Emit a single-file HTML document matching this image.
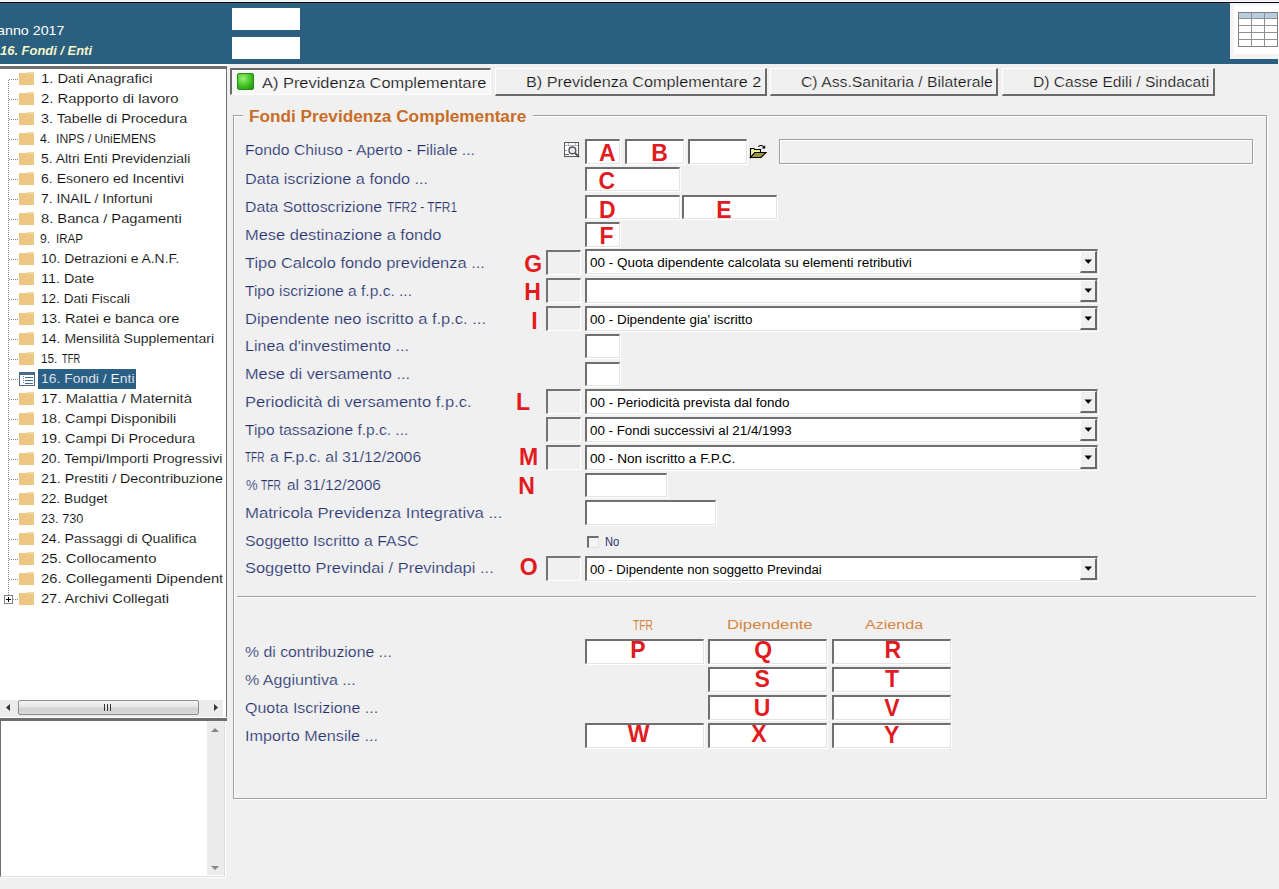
<!DOCTYPE html><html><head><meta charset="utf-8"><style>
*{margin:0;padding:0;box-sizing:border-box}
html,body{width:1279px;height:889px;overflow:hidden;background:#f0f0f0;font-family:"Liberation Sans", sans-serif;position:relative}
.a{position:absolute}
.t{position:absolute;white-space:nowrap;line-height:1}
.sk{position:absolute;background:#fff;border-top:2px solid #6f6f6f;border-left:2px solid #6f6f6f;border-bottom:1px solid #e3e3e3;border-right:1px solid #e3e3e3}
.sg{position:absolute;background:#f0f0f0;border-top:2px solid #747474;border-left:2px solid #747474;border-bottom:1px solid #fff;border-right:1px solid #fff}
.fold{position:absolute;width:15px;height:12px;background:#edc681}
.fold:after{content:"";position:absolute;left:8px;top:-1px;width:7px;height:2px;background:#f3d7a3}
.dh{position:absolute;height:1px;background-image:linear-gradient(to right,#8a8a8a 50%,transparent 50%);background-size:2px 1px}
.dv{position:absolute;width:1px;background-image:linear-gradient(to bottom,#8a8a8a 50%,transparent 50%);background-size:1px 2px}
</style></head><body>
<div class="a" style="left:0;top:0;width:1279px;height:1px;background:#eceef0"></div>
<div class="a" style="left:0;top:1px;width:1279px;height:1px;background:#fafcff"></div>
<div class="a" style="left:0;top:2px;width:1279px;height:1px;background:#000010"></div>
<div class="a" style="left:0;top:3px;width:1278px;height:61px;background:#2a5f7f"></div>
<div class="a" style="left:0;top:3px;width:1230px;height:1px;background:#44607a"></div>
<div class="a" style="left:232px;top:8px;width:68px;height:22px;background:#fff"></div>
<div class="a" style="left:232px;top:37px;width:68px;height:22px;background:#fff"></div>
<div id="t0" class="t" style="left:-3.00px;top:24.96px;font-size:12.8px;color:#fff;transform:scaleX(1.1157);transform-origin:0 0;">anno 2017</div>
<div id="t1" class="t" style="left:-0.50px;top:43.97px;font-size:13.5px;color:#f6f6cc;font-weight:bold;font-style:italic;transform:scaleX(0.9582);transform-origin:0 0;">16. Fondi / Enti</div>
<div class="a" style="left:1230px;top:3px;width:49px;height:56px;background:#f4f4f4"></div>
<div class="a" style="left:1234px;top:6px;width:45px;height:48px;background:#fff"></div>
<svg class="a" style="left:1237px;top:11px" width="42" height="37" viewBox="0 0 42 37"><rect x="1.5" y="1.5" width="39" height="34" fill="#fff" stroke="#808080"/><rect x="2" y="2" width="38" height="5.5" fill="#b9cde0"/><line x1="1.5" y1="7.5" x2="40.5" y2="7.5" stroke="#909090"/><line x1="1.5" y1="14.5" x2="40.5" y2="14.5" stroke="#909090"/><line x1="1.5" y1="21.5" x2="40.5" y2="21.5" stroke="#909090"/><line x1="1.5" y1="28.5" x2="40.5" y2="28.5" stroke="#909090"/><line x1="14.5" y1="1.5" x2="14.5" y2="35.5" stroke="#909090"/><line x1="27.5" y1="1.5" x2="27.5" y2="35.5" stroke="#909090"/></svg>
<div class="a" style="left:0;top:64px;width:228px;height:2px;background:#fff"></div>
<div class="a" style="left:0;top:66px;width:227px;height:655px;background:#fff;border-top:3px solid #707070;border-right:1px solid #707070"></div>
<div class="a" style="left:0;top:69px;width:223px;height:631px;overflow:hidden">
<div class="dv" style="left:8px;top:11px;height:516px"></div>
<div class="dh" style="left:9px;top:10px;width:10px"></div>
<div class="fold" style="left:19px;top:4px"></div>
<div id="t2" class="t" style="left:40.50px;top:3.84px;font-size:12px;color:#0a0a0a;transform:scaleX(1.2291);transform-origin:0 0;-webkit-text-stroke:0.1px #fff;">1. Dati Anagrafici</div>
<div class="dh" style="left:9px;top:30px;width:10px"></div>
<div class="fold" style="left:19px;top:24px"></div>
<div id="t3" class="t" style="left:40.50px;top:23.84px;font-size:12px;color:#0a0a0a;transform:scaleX(1.2342);transform-origin:0 0;-webkit-text-stroke:0.1px #fff;">2. Rapporto di lavoro</div>
<div class="dh" style="left:9px;top:50px;width:10px"></div>
<div class="fold" style="left:19px;top:44px"></div>
<div id="t4" class="t" style="left:40.50px;top:43.84px;font-size:12px;color:#0a0a0a;transform:scaleX(1.1932);transform-origin:0 0;-webkit-text-stroke:0.1px #fff;">3. Tabelle di Procedura</div>
<div class="dh" style="left:9px;top:70px;width:10px"></div>
<div class="fold" style="left:19px;top:64px"></div>
<div id="t5" class="t" style="left:40.30px;top:63.84px;font-size:12px;color:#0a0a0a;transform:scaleX(1.0184);transform-origin:0 0;-webkit-text-stroke:0.1px #fff;">4.</div>
<div id="t6" class="t" style="left:55.50px;top:63.84px;font-size:12px;color:#0a0a0a;transform:scaleX(1.0131);transform-origin:0 0;-webkit-text-stroke:0.1px #fff;">INPS / UniEMENS</div>
<div class="dh" style="left:9px;top:90px;width:10px"></div>
<div class="fold" style="left:19px;top:84px"></div>
<div id="t7" class="t" style="left:40.50px;top:83.84px;font-size:12px;color:#0a0a0a;transform:scaleX(1.1598);transform-origin:0 0;-webkit-text-stroke:0.1px #fff;">5. Altri Enti Previdenziali</div>
<div class="dh" style="left:9px;top:110px;width:10px"></div>
<div class="fold" style="left:19px;top:104px"></div>
<div id="t8" class="t" style="left:40.50px;top:103.84px;font-size:12px;color:#0a0a0a;transform:scaleX(1.1714);transform-origin:0 0;-webkit-text-stroke:0.1px #fff;">6. Esonero ed Incentivi</div>
<div class="dh" style="left:9px;top:130px;width:10px"></div>
<div class="fold" style="left:19px;top:124px"></div>
<div id="t9" class="t" style="left:40.50px;top:123.84px;font-size:12px;color:#0a0a0a;transform:scaleX(1.1581);transform-origin:0 0;-webkit-text-stroke:0.1px #fff;">7. INAIL / Infortuni</div>
<div class="dh" style="left:9px;top:150px;width:10px"></div>
<div class="fold" style="left:19px;top:144px"></div>
<div id="t10" class="t" style="left:40.50px;top:143.84px;font-size:12px;color:#0a0a0a;transform:scaleX(1.2261);transform-origin:0 0;-webkit-text-stroke:0.1px #fff;">8. Banca / Pagamenti</div>
<div class="dh" style="left:9px;top:170px;width:10px"></div>
<div class="fold" style="left:19px;top:164px"></div>
<div id="t11" class="t" style="left:40.30px;top:163.84px;font-size:12px;color:#0a0a0a;transform:scaleX(1.0184);transform-origin:0 0;-webkit-text-stroke:0.1px #fff;">9.</div>
<div id="t12" class="t" style="left:55.50px;top:163.84px;font-size:12px;color:#0a0a0a;transform:scaleX(0.9637);transform-origin:0 0;-webkit-text-stroke:0.1px #fff;">IRAP</div>
<div class="dh" style="left:9px;top:190px;width:10px"></div>
<div class="fold" style="left:19px;top:184px"></div>
<div id="t13" class="t" style="left:40.50px;top:183.84px;font-size:12px;color:#0a0a0a;transform:scaleX(1.1584);transform-origin:0 0;-webkit-text-stroke:0.1px #fff;">10. Detrazioni e A.N.F.</div>
<div class="dh" style="left:9px;top:210px;width:10px"></div>
<div class="fold" style="left:19px;top:204px"></div>
<div id="t14" class="t" style="left:40.50px;top:203.84px;font-size:12px;color:#0a0a0a;transform:scaleX(1.1982);transform-origin:0 0;-webkit-text-stroke:0.1px #fff;">11. Date</div>
<div class="dh" style="left:9px;top:230px;width:10px"></div>
<div class="fold" style="left:19px;top:224px"></div>
<div id="t15" class="t" style="left:40.50px;top:223.84px;font-size:12px;color:#0a0a0a;transform:scaleX(1.1308);transform-origin:0 0;-webkit-text-stroke:0.1px #fff;">12. Dati Fiscali</div>
<div class="dh" style="left:9px;top:250px;width:10px"></div>
<div class="fold" style="left:19px;top:244px"></div>
<div id="t16" class="t" style="left:40.50px;top:243.84px;font-size:12px;color:#0a0a0a;transform:scaleX(1.2052);transform-origin:0 0;-webkit-text-stroke:0.1px #fff;">13. Ratei e banca ore</div>
<div class="dh" style="left:9px;top:270px;width:10px"></div>
<div class="fold" style="left:19px;top:264px"></div>
<div id="t17" class="t" style="left:40.50px;top:263.84px;font-size:12px;color:#0a0a0a;transform:scaleX(1.1683);transform-origin:0 0;-webkit-text-stroke:0.1px #fff;">14. Mensilità Supplementari</div>
<div class="dh" style="left:9px;top:290px;width:10px"></div>
<div class="fold" style="left:19px;top:284px"></div>
<div id="t18" class="t" style="left:41.30px;top:283.84px;font-size:12px;color:#0a0a0a;transform:scaleX(0.9768);transform-origin:0 0;-webkit-text-stroke:0.1px #fff;">15.</div>
<div id="t19" class="t" style="left:62.30px;top:283.84px;font-size:12px;color:#0a0a0a;transform:scaleX(0.7802);transform-origin:0 0;-webkit-text-stroke:0.1px #fff;">TFR</div>
<div class="dh" style="left:9px;top:310px;width:10px"></div>
<div class="a" style="left:38px;top:300px;width:98px;height:20px;background:#2a6086"></div>
<svg class="a" style="left:19px;top:303px" width="16" height="14" viewBox="0 0 16 14"><rect x="0.5" y="0.5" width="15" height="13" fill="#fff" stroke="#4a6a8a"/><rect x="1" y="1" width="14" height="2" fill="#4a6a8a"/><line x1="4.5" y1="4" x2="4.5" y2="12" stroke="#6a8aa8" stroke-dasharray="1 1"/><line x1="6" y1="5.5" x2="14" y2="5.5" stroke="#4a6a8a"/><line x1="6" y1="8.5" x2="14" y2="8.5" stroke="#4a6a8a"/><line x1="6" y1="11.5" x2="14" y2="11.5" stroke="#4a6a8a"/></svg>
<div id="t20" class="t" style="left:40.50px;top:303.84px;font-size:12px;color:#fff;transform:scaleX(1.1583);transform-origin:0 0;-webkit-text-stroke:0.2px #2a6086;">16. Fondi / Enti</div>
<div class="dh" style="left:9px;top:330px;width:10px"></div>
<div class="fold" style="left:19px;top:324px"></div>
<div id="t21" class="t" style="left:40.50px;top:323.84px;font-size:12px;color:#0a0a0a;transform:scaleX(1.2363);transform-origin:0 0;-webkit-text-stroke:0.1px #fff;">17. Malattia / Maternità</div>
<div class="dh" style="left:9px;top:350px;width:10px"></div>
<div class="fold" style="left:19px;top:344px"></div>
<div id="t22" class="t" style="left:40.50px;top:343.84px;font-size:12px;color:#0a0a0a;transform:scaleX(1.1994);transform-origin:0 0;-webkit-text-stroke:0.1px #fff;">18. Campi Disponibili</div>
<div class="dh" style="left:9px;top:370px;width:10px"></div>
<div class="fold" style="left:19px;top:364px"></div>
<div id="t23" class="t" style="left:40.50px;top:363.84px;font-size:12px;color:#0a0a0a;transform:scaleX(1.2033);transform-origin:0 0;-webkit-text-stroke:0.1px #fff;">19. Campi Di Procedura</div>
<div class="dh" style="left:9px;top:390px;width:10px"></div>
<div class="fold" style="left:19px;top:384px"></div>
<div id="t24" class="t" style="left:40.50px;top:383.84px;font-size:12px;color:#0a0a0a;transform:scaleX(1.1735);transform-origin:0 0;-webkit-text-stroke:0.1px #fff;">20. Tempi/Importi Progressivi</div>
<div class="dh" style="left:9px;top:410px;width:10px"></div>
<div class="fold" style="left:19px;top:404px"></div>
<div id="t25" class="t" style="left:40.50px;top:403.84px;font-size:12px;color:#0a0a0a;transform:scaleX(1.1856);transform-origin:0 0;-webkit-text-stroke:0.1px #fff;">21. Prestiti / Decontribuzione</div>
<div class="dh" style="left:9px;top:430px;width:10px"></div>
<div class="fold" style="left:19px;top:424px"></div>
<div id="t26" class="t" style="left:40.50px;top:423.84px;font-size:12px;color:#0a0a0a;transform:scaleX(1.1488);transform-origin:0 0;-webkit-text-stroke:0.1px #fff;">22. Budget</div>
<div class="dh" style="left:9px;top:450px;width:10px"></div>
<div class="fold" style="left:19px;top:444px"></div>
<div id="t27" class="t" style="left:40.50px;top:443.84px;font-size:12px;color:#0a0a0a;transform:scaleX(1.0563);transform-origin:0 0;-webkit-text-stroke:0.1px #fff;">23. 730</div>
<div class="dh" style="left:9px;top:470px;width:10px"></div>
<div class="fold" style="left:19px;top:464px"></div>
<div id="t28" class="t" style="left:40.50px;top:463.84px;font-size:12px;color:#0a0a0a;transform:scaleX(1.1781);transform-origin:0 0;-webkit-text-stroke:0.1px #fff;">24. Passaggi di Qualifica</div>
<div class="dh" style="left:9px;top:490px;width:10px"></div>
<div class="fold" style="left:19px;top:484px"></div>
<div id="t29" class="t" style="left:40.50px;top:483.84px;font-size:12px;color:#0a0a0a;transform:scaleX(1.2367);transform-origin:0 0;-webkit-text-stroke:0.1px #fff;">25. Collocamento</div>
<div class="dh" style="left:9px;top:510px;width:10px"></div>
<div class="fold" style="left:19px;top:504px"></div>
<div id="t30" class="t" style="left:40.50px;top:503.84px;font-size:12px;color:#0a0a0a;transform:scaleX(1.2304);transform-origin:0 0;-webkit-text-stroke:0.1px #fff;">26. Collegamenti Dipendenti</div>
<div class="dh" style="left:9px;top:530px;width:10px"></div>
<div class="fold" style="left:19px;top:524px"></div>
<div id="t31" class="t" style="left:40.50px;top:523.84px;font-size:12px;color:#0a0a0a;transform:scaleX(1.2155);transform-origin:0 0;-webkit-text-stroke:0.1px #fff;">27. Archivi Collegati</div>
<div class="a" style="left:4px;top:526px;width:9px;height:9px;border:1px solid #808080;background:#fff"></div>
<div class="a" style="left:6px;top:530px;width:5px;height:1px;background:#000"></div>
<div class="a" style="left:8px;top:528px;width:1px;height:5px;background:#000"></div>
</div>
<div class="a" style="left:0;top:700px;width:223px;height:17px;background:#ececec"></div>
<div class="a" style="left:18px;top:700px;width:181px;height:15px;border:1px solid #8e8e8e;border-radius:2px;background:linear-gradient(#f4f4f4,#e6e6e6 45%,#d2d2d2 55%,#d8d8d8)"></div>
<div class="a" style="left:104px;top:704px;width:1px;height:7px;background:#333"></div>
<div class="a" style="left:107px;top:704px;width:1px;height:7px;background:#333"></div>
<div class="a" style="left:110px;top:704px;width:1px;height:7px;background:#333"></div>
<svg class="a" style="left:5px;top:704px" width="6" height="8"><polygon points="5,0 5,7 1,3.5" fill="#333"/></svg>
<svg class="a" style="left:213px;top:704px" width="6" height="8"><polygon points="1,0 1,7 5,3.5" fill="#333"/></svg>
<div class="a" style="left:0;top:717px;width:227px;height:1px;background:#fff"></div>
<div class="a" style="left:0;top:718px;width:227px;height:3px;background:#6e6e6e"></div>
<div class="a" style="left:0;top:721px;width:225px;height:156px;background:#fff;border-left:1px solid #6e6e6e;border-right:1px solid #e0e0e0;border-bottom:1px solid #e0e0e0;box-shadow:1px 1px 0 #fff"></div>
<div class="a" style="left:207px;top:721px;width:17px;height:154px;background:#ececec"></div>
<svg class="a" style="left:211px;top:727px" width="9" height="6"><polygon points="0,5 8,5 4,1" fill="#888"/></svg>
<svg class="a" style="left:211px;top:865px" width="9" height="6"><polygon points="0,1 8,1 4,5" fill="#888"/></svg>
<div class="a" style="left:230px;top:68px;width:261px;height:27px;border-top:2px solid #6a6a6a;border-left:2px solid #6a6a6a;border-right:1px solid #fff;border-bottom:1px solid #fff;background-color:#f4f4f4;background-image:linear-gradient(45deg,#fafafa 25%,transparent 25%,transparent 75%,#fafafa 75%),linear-gradient(45deg,#fafafa 25%,transparent 25%,transparent 75%,#fafafa 75%);background-size:2px 2px;background-position:0 0,1px 1px"></div>
<div class="a" style="left:237px;top:73px;width:17px;height:17px;border-radius:2px;background:radial-gradient(circle at 35% 30%,#9af07a,#3cc21e 55%,#1f8a10);border:1px solid #2a8a18"></div>
<div id="t32" class="t" style="left:262.20px;top:76.15px;font-size:14px;color:#111;transform:scaleX(1.1718);transform-origin:0 0;-webkit-text-stroke:0.2px #f4f4f4;">A) Previdenza Complementare</div>
<div class="a" style="left:495px;top:68px;width:272px;height:28px;border-top:1px solid #fff;border-left:1px solid #fff;border-right:2px solid #6a6a6a;border-bottom:2px solid #6a6a6a;background:#f0f0f0"></div>
<div id="t33" class="t" style="left:526.00px;top:75.15px;font-size:14px;color:#111;transform:scaleX(1.1580);transform-origin:0 0;-webkit-text-stroke:0.2px #f0f0f0;">B) Previdenza Complementare 2</div>
<div class="a" style="left:770px;top:68px;width:228px;height:28px;border-top:1px solid #fff;border-left:1px solid #fff;border-right:2px solid #6a6a6a;border-bottom:2px solid #6a6a6a;background:#f0f0f0"></div>
<div id="t34" class="t" style="left:800.60px;top:75.15px;font-size:14px;color:#111;transform:scaleX(1.1250);transform-origin:0 0;-webkit-text-stroke:0.2px #f0f0f0;">C) Ass.Sanitaria / Bilaterale</div>
<div class="a" style="left:1002px;top:68px;width:213px;height:28px;border-top:1px solid #fff;border-left:1px solid #fff;border-right:2px solid #6a6a6a;border-bottom:2px solid #6a6a6a;background:#f0f0f0"></div>
<div id="t35" class="t" style="left:1032.50px;top:75.15px;font-size:14px;color:#111;transform:scaleX(1.1149);transform-origin:0 0;-webkit-text-stroke:0.2px #f0f0f0;">D) Casse Edili / Sindacati</div>
<div class="a" style="left:233px;top:115px;width:1034px;height:684px;border:1px solid #a0a0a0;box-shadow:inset 1px 1px 0 #fff,1px 1px 0 #fff"></div>
<div class="a" style="left:243px;top:110px;width:290px;height:10px;background:#f0f0f0"></div>
<div id="t36" class="t" style="left:248.60px;top:108.96px;font-size:16px;color:#c96d27;font-weight:bold;transform:scaleX(1.0751);transform-origin:0 0;">Fondi Previdenza Complementare</div>
<div id="t37" class="t" style="left:245.30px;top:142.86px;font-size:14.7px;color:#25306f;transform:scaleX(1.0712);transform-origin:0 0;-webkit-text-stroke:0.2px #f0f0f0;">Fondo Chiuso - Aperto - Filiale ...</div>
<div id="t38" class="t" style="left:245.30px;top:171.76px;font-size:14.7px;color:#25306f;transform:scaleX(1.1042);transform-origin:0 0;-webkit-text-stroke:0.2px #f0f0f0;">Data iscrizione a fondo ...</div>
<div id="t39" class="t" style="left:245.30px;top:199.76px;font-size:14.7px;color:#25306f;transform:scaleX(1.0757);transform-origin:0 0;-webkit-text-stroke:0.2px #f0f0f0;">Data Sottoscrizione</div>
<div id="t40" class="t" style="left:386.80px;top:199.76px;font-size:14.7px;color:#25306f;transform:scaleX(0.8129);transform-origin:0 0;-webkit-text-stroke:0.2px #f0f0f0;">TFR2 - TFR1</div>
<div id="t41" class="t" style="left:245.30px;top:227.76px;font-size:14.7px;color:#25306f;transform:scaleX(1.1193);transform-origin:0 0;-webkit-text-stroke:0.2px #f0f0f0;">Mese destinazione a fondo</div>
<div id="t42" class="t" style="left:245.30px;top:255.56px;font-size:14.7px;color:#25306f;transform:scaleX(1.1200);transform-origin:0 0;-webkit-text-stroke:0.2px #f0f0f0;">Tipo Calcolo fondo previdenza ...</div>
<div id="t43" class="t" style="left:245.30px;top:284.06px;font-size:14.7px;color:#25306f;transform:scaleX(1.0582);transform-origin:0 0;-webkit-text-stroke:0.2px #f0f0f0;">Tipo iscrizione a f.p.c. ...</div>
<div id="t44" class="t" style="left:245.30px;top:312.16px;font-size:14.7px;color:#25306f;transform:scaleX(1.1224);transform-origin:0 0;-webkit-text-stroke:0.2px #f0f0f0;">Dipendente neo iscritto a f.p.c. ...</div>
<div id="t45" class="t" style="left:245.30px;top:339.16px;font-size:14.7px;color:#25306f;transform:scaleX(1.0944);transform-origin:0 0;-webkit-text-stroke:0.2px #f0f0f0;">Linea d'investimento ...</div>
<div id="t46" class="t" style="left:245.30px;top:367.16px;font-size:14.7px;color:#25306f;transform:scaleX(1.1105);transform-origin:0 0;-webkit-text-stroke:0.2px #f0f0f0;">Mese di versamento ...</div>
<div id="t47" class="t" style="left:245.30px;top:394.96px;font-size:14.7px;color:#25306f;transform:scaleX(1.1288);transform-origin:0 0;-webkit-text-stroke:0.2px #f0f0f0;">Periodicità di versamento f.p.c.</div>
<div id="t48" class="t" style="left:245.30px;top:422.96px;font-size:14.7px;color:#25306f;transform:scaleX(1.0564);transform-origin:0 0;-webkit-text-stroke:0.2px #f0f0f0;">Tipo tassazione f.p.c. ...</div>
<div id="t49" class="t" style="left:245.30px;top:450.36px;font-size:14.7px;color:#25306f;transform:scaleX(0.6792);transform-origin:0 0;-webkit-text-stroke:0.2px #f0f0f0;">TFR</div>
<div id="t50" class="t" style="left:270.30px;top:450.36px;font-size:14.7px;color:#25306f;transform:scaleX(1.0765);transform-origin:0 0;-webkit-text-stroke:0.2px #f0f0f0;">a F.p.c. al 31/12/2006</div>
<div id="t51" class="t" style="left:245.60px;top:477.86px;font-size:14.7px;color:#25306f;transform:scaleX(0.8880);transform-origin:0 0;-webkit-text-stroke:0.2px #f0f0f0;">%</div>
<div id="t52" class="t" style="left:261.20px;top:477.86px;font-size:14.7px;color:#25306f;transform:scaleX(0.6967);transform-origin:0 0;-webkit-text-stroke:0.2px #f0f0f0;">TFR</div>
<div id="t53" class="t" style="left:286.50px;top:477.86px;font-size:14.7px;color:#25306f;transform:scaleX(1.0558);transform-origin:0 0;-webkit-text-stroke:0.2px #f0f0f0;">al 31/12/2006</div>
<div id="t54" class="t" style="left:245.30px;top:505.86px;font-size:14.7px;color:#25306f;transform:scaleX(1.1382);transform-origin:0 0;-webkit-text-stroke:0.2px #f0f0f0;">Matricola Previdenza Integrativa ...</div>
<div id="t55" class="t" style="left:245.30px;top:533.66px;font-size:14.7px;color:#25306f;transform:scaleX(1.0800);transform-origin:0 0;-webkit-text-stroke:0.2px #f0f0f0;">Soggetto Iscritto a FASC</div>
<div id="t56" class="t" style="left:245.30px;top:561.06px;font-size:14.7px;color:#25306f;transform:scaleX(1.1199);transform-origin:0 0;-webkit-text-stroke:0.2px #f0f0f0;">Soggetto Previndai / Previndapi ...</div>
<svg class="a" style="left:564px;top:142px" width="17" height="17" viewBox="0 0 17 17"><rect x="0.5" y="0.5" width="14" height="14" fill="#fff" stroke="#5e5e5e" stroke-width="1.1"/><line x1="1" y1="3.5" x2="14" y2="3.5" stroke="#b4b4b4"/><line x1="4.5" y1="1" x2="4.5" y2="3" stroke="#b4b4b4"/><line x1="11.5" y1="1" x2="11.5" y2="3" stroke="#b4b4b4"/><line x1="1" y1="12.5" x2="5" y2="12.5" stroke="#666"/><line x1="1" y1="8.5" x2="3" y2="8.5" stroke="#999"/><circle cx="8.4" cy="8.4" r="3.4" fill="#e6eaee" stroke="#555" stroke-width="1.4"/><line x1="11" y1="11" x2="15" y2="15" stroke="#555" stroke-width="2"/></svg>
<div class="sk" style="left:585px;top:139px;width:35px;height:25px;box-shadow:1px 1px 0 #fff"></div>
<div class="sk" style="left:625px;top:139px;width:59px;height:25px;box-shadow:1px 1px 0 #fff"></div>
<div class="sk" style="left:688px;top:139px;width:59px;height:25px;box-shadow:1px 1px 0 #fff"></div>
<svg class="a" style="left:749px;top:144px" width="19" height="16" viewBox="0 0 19 16"><path d="M1.5 13.5 L1.5 4.5 L5 4.5 L5.5 5.5 L11.5 5.5 L11.5 8.5 L6 8.5 Z" fill="#f0f09a" stroke="#000" stroke-width="1.1"/><path d="M1.5 13.5 L6 8.5 L17 8.5 L12 13.5 Z" fill="#9b9a3c" stroke="#000" stroke-width="1.1"/><path d="M9.3 2.6 Q12 0.4 14.6 2.6" fill="none" stroke="#000" stroke-width="1.1"/><polygon points="12.6,4.6 16.2,4.6 16.2,1.2" fill="#000"/></svg>
<div class="a" style="left:779px;top:139px;width:474px;height:25px;border:1px solid #a0a0a0;box-shadow:1px 1px 0 #fff, inset 1px 1px 0 #fff;background:#f0f0f0"></div>
<div class="t" style="left:577.20px;width:60px;text-align:center;top:142.13px;font-size:23px;font-weight:bold;color:#e01b22">A</div>
<div class="t" style="left:629.50px;width:60px;text-align:center;top:142.13px;font-size:23px;font-weight:bold;color:#e01b22">B</div>
<div class="sk" style="left:585px;top:167px;width:95px;height:24px;box-shadow:1px 1px 0 #fff"></div>
<div class="t" style="left:576.90px;width:60px;text-align:center;top:170.33px;font-size:23px;font-weight:bold;color:#e01b22">C</div>
<div class="sk" style="left:585px;top:195px;width:95px;height:24px;box-shadow:1px 1px 0 #fff"></div>
<div class="sk" style="left:682px;top:195px;width:95px;height:24px;box-shadow:1px 1px 0 #fff"></div>
<div class="t" style="left:577.30px;width:60px;text-align:center;top:198.83px;font-size:23px;font-weight:bold;color:#e01b22">D</div>
<div class="t" style="left:694.00px;width:60px;text-align:center;top:198.83px;font-size:23px;font-weight:bold;color:#e01b22">E</div>
<div class="sk" style="left:585px;top:222px;width:35px;height:25px;box-shadow:1px 1px 0 #fff"></div>
<div class="t" style="left:576.50px;width:60px;text-align:center;top:224.53px;font-size:23px;font-weight:bold;color:#e01b22">F</div>
<div class="sg" style="left:546px;top:250px;width:35px;height:25px"></div>
<div class="sk" style="left:585px;top:249px;width:513px;height:25px;box-shadow:1px 1px 0 #fff"></div>
<div class="a" style="left:1080px;top:251px;width:17px;height:22px;border-top:1px solid #fff;border-left:1px solid #fff;border-right:2px solid #6a6a6a;border-bottom:2px solid #6a6a6a;background:#f0f0f0"></div>
<svg class="a" style="left:1084px;top:259px" width="9" height="6"><polygon points="0.5,0.5 8,0.5 4.25,4.8" fill="#000"/></svg>
<div id="t57" class="t" style="left:589.60px;top:257.02px;font-size:12.5px;color:#000;transform:scaleX(1.0770);transform-origin:0 0;">00 - Quota dipendente calcolata su elementi retributivi</div>
<div class="t" style="left:503.20px;width:60px;text-align:center;top:252.53px;font-size:23px;font-weight:bold;color:#e01b22">G</div>
<div class="sg" style="left:546px;top:278px;width:35px;height:25px"></div>
<div class="sk" style="left:585px;top:278px;width:513px;height:25px;box-shadow:1px 1px 0 #fff"></div>
<div class="a" style="left:1080px;top:280px;width:17px;height:22px;border-top:1px solid #fff;border-left:1px solid #fff;border-right:2px solid #6a6a6a;border-bottom:2px solid #6a6a6a;background:#f0f0f0"></div>
<svg class="a" style="left:1084px;top:288px" width="9" height="6"><polygon points="0.5,0.5 8,0.5 4.25,4.8" fill="#000"/></svg>
<div class="t" style="left:502.50px;width:60px;text-align:center;top:280.73px;font-size:23px;font-weight:bold;color:#e01b22">H</div>
<div class="sg" style="left:546px;top:306px;width:35px;height:25px"></div>
<div class="sk" style="left:585px;top:306px;width:513px;height:25px;box-shadow:1px 1px 0 #fff"></div>
<div class="a" style="left:1080px;top:308px;width:17px;height:22px;border-top:1px solid #fff;border-left:1px solid #fff;border-right:2px solid #6a6a6a;border-bottom:2px solid #6a6a6a;background:#f0f0f0"></div>
<svg class="a" style="left:1084px;top:316px" width="9" height="6"><polygon points="0.5,0.5 8,0.5 4.25,4.8" fill="#000"/></svg>
<div id="t58" class="t" style="left:589.60px;top:314.02px;font-size:12.5px;color:#000;transform:scaleX(1.0762);transform-origin:0 0;">00 - Dipendente gia' iscritto</div>
<div class="t" style="left:504.50px;width:60px;text-align:center;top:309.83px;font-size:23px;font-weight:bold;color:#e01b22">I</div>
<div class="sk" style="left:585px;top:334px;width:35px;height:24px;box-shadow:1px 1px 0 #fff"></div>
<div class="sk" style="left:585px;top:362px;width:35px;height:24px;box-shadow:1px 1px 0 #fff"></div>
<div class="sg" style="left:546px;top:389px;width:35px;height:25px"></div>
<div class="sk" style="left:585px;top:389px;width:513px;height:25px;box-shadow:1px 1px 0 #fff"></div>
<div class="a" style="left:1080px;top:391px;width:17px;height:22px;border-top:1px solid #fff;border-left:1px solid #fff;border-right:2px solid #6a6a6a;border-bottom:2px solid #6a6a6a;background:#f0f0f0"></div>
<svg class="a" style="left:1084px;top:399px" width="9" height="6"><polygon points="0.5,0.5 8,0.5 4.25,4.8" fill="#000"/></svg>
<div id="t59" class="t" style="left:589.60px;top:397.02px;font-size:12.5px;color:#000;transform:scaleX(1.0748);transform-origin:0 0;">00 - Periodicità prevista dal fondo</div>
<div class="t" style="left:493.10px;width:60px;text-align:center;top:391.13px;font-size:23px;font-weight:bold;color:#e01b22">L</div>
<div class="sg" style="left:546px;top:417px;width:35px;height:25px"></div>
<div class="sk" style="left:585px;top:417px;width:513px;height:25px;box-shadow:1px 1px 0 #fff"></div>
<div class="a" style="left:1080px;top:419px;width:17px;height:22px;border-top:1px solid #fff;border-left:1px solid #fff;border-right:2px solid #6a6a6a;border-bottom:2px solid #6a6a6a;background:#f0f0f0"></div>
<svg class="a" style="left:1084px;top:427px" width="9" height="6"><polygon points="0.5,0.5 8,0.5 4.25,4.8" fill="#000"/></svg>
<div id="t60" class="t" style="left:589.60px;top:425.02px;font-size:12.5px;color:#000;transform:scaleX(1.0672);transform-origin:0 0;">00 - Fondi successivi al 21/4/1993</div>
<div class="sg" style="left:546px;top:445px;width:35px;height:25px"></div>
<div class="sk" style="left:585px;top:445px;width:513px;height:25px;box-shadow:1px 1px 0 #fff"></div>
<div class="a" style="left:1080px;top:447px;width:17px;height:22px;border-top:1px solid #fff;border-left:1px solid #fff;border-right:2px solid #6a6a6a;border-bottom:2px solid #6a6a6a;background:#f0f0f0"></div>
<svg class="a" style="left:1084px;top:455px" width="9" height="6"><polygon points="0.5,0.5 8,0.5 4.25,4.8" fill="#000"/></svg>
<div id="t61" class="t" style="left:589.60px;top:453.02px;font-size:12.5px;color:#000;transform:scaleX(1.0862);transform-origin:0 0;">00 - Non iscritto a F.P.C.</div>
<div class="t" style="left:498.50px;width:60px;text-align:center;top:445.83px;font-size:23px;font-weight:bold;color:#e01b22">M</div>
<div class="sk" style="left:585px;top:473px;width:82px;height:24px;box-shadow:1px 1px 0 #fff"></div>
<div class="t" style="left:496.60px;width:60px;text-align:center;top:475.33px;font-size:23px;font-weight:bold;color:#e01b22">N</div>
<div class="sk" style="left:585px;top:500px;width:131px;height:25px;box-shadow:1px 1px 0 #fff"></div>
<div class="sk" style="left:587px;top:536px;width:12px;height:12px;border-width:2px 1px 1px 2px;background:#f4f4f4"></div>
<div id="t62" class="t" style="left:605.30px;top:536.22px;font-size:12.5px;color:#25306f;transform:scaleX(0.8884);transform-origin:0 0;">No</div>
<div class="sg" style="left:546px;top:556px;width:35px;height:25px"></div>
<div class="sk" style="left:585px;top:556px;width:513px;height:25px;box-shadow:1px 1px 0 #fff"></div>
<div class="a" style="left:1080px;top:558px;width:17px;height:22px;border-top:1px solid #fff;border-left:1px solid #fff;border-right:2px solid #6a6a6a;border-bottom:2px solid #6a6a6a;background:#f0f0f0"></div>
<svg class="a" style="left:1084px;top:566px" width="9" height="6"><polygon points="0.5,0.5 8,0.5 4.25,4.8" fill="#000"/></svg>
<div id="t63" class="t" style="left:589.60px;top:564.02px;font-size:12.5px;color:#000;transform:scaleX(1.0518);transform-origin:0 0;">00 - Dipendente non soggetto Previndai</div>
<div class="t" style="left:498.70px;width:60px;text-align:center;top:556.33px;font-size:23px;font-weight:bold;color:#e01b22">O</div>
<div class="a" style="left:237px;top:596px;width:1019px;height:1px;background:#a0a0a0"></div>
<div class="a" style="left:237px;top:597px;width:1019px;height:1px;background:#fff"></div>
<div id="t64" class="t" style="left:633.30px;top:617.73px;font-size:14.5px;color:#d4853f;transform:scaleX(0.7060);transform-origin:0 0;">TFR</div>
<div id="t65" class="t" style="left:726.50px;top:619.12px;font-size:12.5px;color:#d4853f;transform:scaleX(1.3400);transform-origin:0 0;">Dipendente</div>
<div id="t66" class="t" style="left:864.60px;top:619.12px;font-size:12.5px;color:#d4853f;transform:scaleX(1.2858);transform-origin:0 0;">Azienda</div>
<div id="t67" class="t" style="left:245.30px;top:644.76px;font-size:14.7px;color:#25306f;transform:scaleX(1.0767);transform-origin:0 0;-webkit-text-stroke:0.2px #f0f0f0;">% di contribuzione ...</div>
<div id="t68" class="t" style="left:245.30px;top:673.06px;font-size:14.7px;color:#25306f;transform:scaleX(1.0933);transform-origin:0 0;-webkit-text-stroke:0.2px #f0f0f0;">% Aggiuntiva ...</div>
<div id="t69" class="t" style="left:245.30px;top:700.66px;font-size:14.7px;color:#25306f;transform:scaleX(1.0869);transform-origin:0 0;-webkit-text-stroke:0.2px #f0f0f0;">Quota Iscrizione ...</div>
<div id="t70" class="t" style="left:245.30px;top:728.86px;font-size:14.7px;color:#25306f;transform:scaleX(1.1017);transform-origin:0 0;-webkit-text-stroke:0.2px #f0f0f0;">Importo Mensile ...</div>
<div class="sk" style="left:585px;top:639px;width:119px;height:25px;box-shadow:1px 1px 0 #fff"></div>
<div class="sk" style="left:708px;top:639px;width:119px;height:25px;box-shadow:1px 1px 0 #fff"></div>
<div class="sk" style="left:832px;top:639px;width:119px;height:25px;box-shadow:1px 1px 0 #fff"></div>
<div class="sk" style="left:708px;top:667px;width:119px;height:25px;box-shadow:1px 1px 0 #fff"></div>
<div class="sk" style="left:832px;top:667px;width:119px;height:25px;box-shadow:1px 1px 0 #fff"></div>
<div class="sk" style="left:708px;top:695px;width:119px;height:25px;box-shadow:1px 1px 0 #fff"></div>
<div class="sk" style="left:832px;top:695px;width:119px;height:25px;box-shadow:1px 1px 0 #fff"></div>
<div class="sk" style="left:585px;top:723px;width:119px;height:25px;box-shadow:1px 1px 0 #fff"></div>
<div class="sk" style="left:708px;top:723px;width:119px;height:25px;box-shadow:1px 1px 0 #fff"></div>
<div class="sk" style="left:832px;top:723px;width:119px;height:25px;box-shadow:1px 1px 0 #fff"></div>
<div class="t" style="left:607.90px;width:60px;text-align:center;top:638.53px;font-size:23px;font-weight:bold;color:#e01b22">P</div>
<div class="t" style="left:733.10px;width:60px;text-align:center;top:638.53px;font-size:23px;font-weight:bold;color:#e01b22">Q</div>
<div class="t" style="left:862.70px;width:60px;text-align:center;top:638.53px;font-size:23px;font-weight:bold;color:#e01b22">R</div>
<div class="t" style="left:732.20px;width:60px;text-align:center;top:667.53px;font-size:23px;font-weight:bold;color:#e01b22">S</div>
<div class="t" style="left:862.00px;width:60px;text-align:center;top:667.53px;font-size:23px;font-weight:bold;color:#e01b22">T</div>
<div class="t" style="left:732.00px;width:60px;text-align:center;top:696.53px;font-size:23px;font-weight:bold;color:#e01b22">U</div>
<div class="t" style="left:861.90px;width:60px;text-align:center;top:696.53px;font-size:23px;font-weight:bold;color:#e01b22">V</div>
<div class="t" style="left:608.50px;width:60px;text-align:center;top:722.83px;font-size:23px;font-weight:bold;color:#e01b22">W</div>
<div class="t" style="left:728.80px;width:60px;text-align:center;top:722.83px;font-size:23px;font-weight:bold;color:#e01b22">X</div>
<div class="t" style="left:861.60px;width:60px;text-align:center;top:723.53px;font-size:23px;font-weight:bold;color:#e01b22">Y</div>
</body></html>
